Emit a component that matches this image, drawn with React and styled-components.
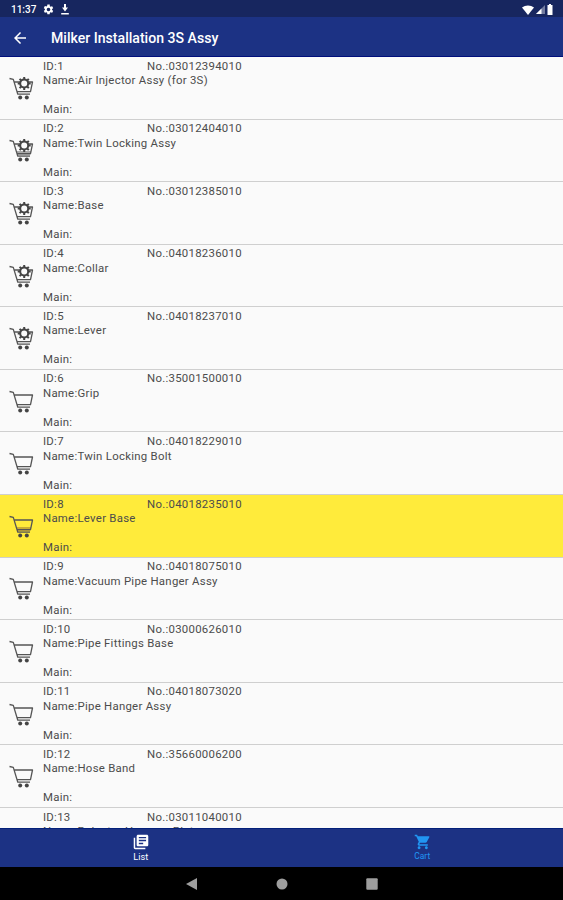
import { createGlobalStyle, styled } from "styled-components";

const parts = [
  { id: 1, no: "03012394010", name: "Air Injector Assy (for 3S)", assembly: true },
  { id: 2, no: "03012404010", name: "Twin Locking Assy", assembly: true, filled: true },
  { id: 3, no: "03012385010", name: "Base", assembly: true },
  { id: 4, no: "04018236010", name: "Collar", assembly: true },
  { id: 5, no: "04018237010", name: "Lever", assembly: true },
  { id: 6, no: "35001500010", name: "Grip" },
  { id: 7, no: "04018229010", name: "Twin Locking Bolt" },
  { id: 8, no: "04018235010", name: "Lever Base", selected: true },
  { id: 9, no: "04018075010", name: "Vacuum Pipe Hanger Assy" },
  { id: 10, no: "03000626010", name: "Pipe Fittings Base" },
  { id: 11, no: "04018073020", name: "Pipe Hanger Assy" },
  { id: 12, no: "35660006200", name: "Hose Band" },
  { id: 13, no: "03011040010", name: "Pulsator Hangers Plate" },
];

const GlobalStyle = createGlobalStyle`
  * {
    box-sizing: border-box;
  }
  body {
    margin: 0;
    font-family: Roboto, "Liberation Sans", sans-serif;
  }
`;

const Screen = styled.div`
  display: flex;
  flex-direction: column;
  width: 100%;
  height: 900px;
  overflow: hidden;
  background: #fafafa;
`;

const StatusBar = styled.div`
  display: flex;
  flex: none;
  align-items: center;
  justify-content: space-between;
  height: 17px;
  padding: 2px 10px 0 11px;
  background: #17265f;
  color: #fff;
`;

const StatusGroup = styled.div`
  display: flex;
  align-items: center;
  gap: ${(props) => props.$gap}px;
  svg {
    display: block;
  }
`;

const Clock = styled.span`
  width: 25px;
  font-size: 10px;
  font-weight: 500;
  line-height: 16px;
  margin-right: 1px;
`;

const AppBar = styled.header`
  display: flex;
  flex: none;
  align-items: center;
  height: 40px;
  padding: 2px 14px 0;
  border-bottom: 1.5px solid #000f7c;
  background: #1c3284;
  color: #fff;
  svg {
    display: block;
    margin-right: 25px;
  }
  h1 {
    margin: 0;
    font-size: 14.1px;
    font-weight: 500;
    line-height: 20px;
  }
`;

const List = styled.main`
  flex: 1;
  min-height: 0;
  overflow: hidden;
`;

const Row = styled.div`
  display: flex;
  height: 62.58px;
  border-bottom: 1.5px solid #cfcfcf;
  background: ${(props) => (props.$selected ? "#ffeb3b" : "#fafafa")};
`;

const IconCell = styled.div`
  display: flex;
  flex: none;
  align-items: center;
  width: 43px;
  padding: 2px 0 0 9px;
  svg {
    display: block;
  }
`;

const Details = styled.div`
  padding-top: 1.6px;
  font-size: 11.4px;
  line-height: 14.5px;
  letter-spacing: 0.27px;
  color: #4c4c4c;
  white-space: nowrap;
`;

const Codes = styled.div`
  display: grid;
  grid-template-columns: 104px auto;
`;

const MainCode = styled.div`
  margin-top: 14.5px;
`;

const TabBar = styled.nav`
  display: grid;
  flex: none;
  grid-template-columns: 1fr 1fr;
  height: 39.5px;
  border-top: 1.5px solid #04207a;
  background: #1c3284;
`;

const Tab = styled.div`
  display: flex;
  flex-direction: column;
  align-items: center;
  padding-top: 5px;
  color: ${(props) => (props.$active ? "#2196f3" : "#fff")};
  font-size: ${(props) => (props.$active ? 8.4 : 9.2)}px;
  line-height: 11px;
  svg {
    display: block;
    margin-bottom: 1px;
  }
`;

const SystemBar = styled.div`
  display: flex;
  flex: none;
  align-items: center;
  justify-content: center;
  gap: 78px;
  height: 33px;
  background: #000;
  svg {
    display: block;
  }
`;

const teeth = [0, 45, 90, 135, 180, 225, 270, 315];

const CartIcon = ({ assembly, filled, selected }) => (
  <svg width="25" height="24" viewBox="0 0 25 24" fill="none">
    {(filled || selected) && (
      <path d="M7.5 12h14.5L21 16.500H8.800z" fill={selected ? "#c8ad35" : "#aaa"} />
    )}
    <path
      d="M.5 1.500l3.800.900L8.800 17.200h12.200M5.300 5h18.200L21.500 14.600H8"
      stroke="#555"
      strokeWidth="1.300"
      strokeLinejoin="round"
    />
    <circle cx="11.200" cy="20.500" r="2" fill="#444" />
    <circle cx="17.800" cy="20.500" r="2" fill="#444" />
    {assembly && (
      <g stroke="#444">
        <circle cx="15.200" cy="6.500" r="4" fill="#fafafa" strokeWidth="2" />
        {teeth.map((angle) => (
          <path
            key={angle}
            d="M15.200 0v2.300"
            strokeWidth="2"
            transform={`rotate(${angle} 15.2 6.5)`}
          />
        ))}
      </g>
    )}
  </svg>
);

const PartRow = ({ part }) => (
  <Row $selected={part.selected}>
    <IconCell>
      <CartIcon
        assembly={part.assembly}
        filled={part.filled}
        selected={part.selected}
      />
    </IconCell>
    <Details>
      <Codes>
        <span>ID:{part.id}</span>
        <span>No.:{part.no}</span>
      </Codes>
      <div>Name:{part.name}</div>
      <MainCode>Main:</MainCode>
    </Details>
  </Row>
);

const App = () => {
  return (
    <Screen>
      <GlobalStyle />
      <StatusBar>
        <StatusGroup $gap={6}>
          <Clock>11:37</Clock>
          <svg width="11" height="11" viewBox="1 1 22 22" fill="#fff">
            <path d="M19.14 12.94c.04-.3.06-.61.06-.94s-.02-.64-.07-.94l2.03-1.58a.49.49 0 0 0 .12-.61l-1.92-3.32a.49.49 0 0 0-.59-.22l-2.39.96a7 7 0 0 0-1.62-.94l-.36-2.54A.48.48 0 0 0 13.92 2h-3.84a.48.48 0 0 0-.47.41l-.36 2.54c-.59.24-1.13.57-1.62.94l-2.39-.96a.48.48 0 0 0-.59.22L2.74 8.87a.48.48 0 0 0 .12.61l2.03 1.58a6 6 0 0 0 0 1.88l-2.03 1.58a.49.49 0 0 0-.12.61l1.92 3.32c.12.22.37.29.59.22l2.39-.96c.5.38 1.03.7 1.62.94l.36 2.54c.05.24.24.41.48.41h3.84c.24 0 .44-.17.47-.41l.36-2.54a7 7 0 0 0 1.62-.94l2.39.96c.22.08.47 0 .59-.22l1.92-3.32a.48.48 0 0 0-.12-.61zM12 15.6a3.6 3.6 0 1 1 0-7.2 3.6 3.6 0 0 1 0 7.2z" />
          </svg>
          <svg width="10" height="11" viewBox="0 0 10 11" fill="#fff">
            <path d="M4 0h2v3.500h2L5 7.500 2 3.500h2zM1.200 9h7.600v1.500H1.200z" />
          </svg>
        </StatusGroup>
        <StatusGroup $gap={2}>
          <svg width="12" height="10" viewBox="0 0 12 10" fill="#fff">
            <path d="M0 2.600C3.400-.3 8.600-.3 12 2.600L6 10z" />
          </svg>
          <svg width="9" height="9" viewBox="0 0 9 9" fill="#fff">
            <path d="M9 0v9H0z" opacity=".4" />
            <path d="M5.500 3.500V9H0z" />
          </svg>
          <svg width="6" height="11" viewBox="0 0 6 11" fill="#fff">
            <path d="M2 0h2v1h1.500v10h-5V1H2z" />
          </svg>
        </StatusGroup>
      </StatusBar>
      <AppBar>
        <svg width="12" height="12" viewBox="4 4 16 16" fill="#fff">
          <path d="M20 11H7.830l5.590-5.590L12 4l-8 8 8 8 1.410-1.410L7.830 13H20z" />
        </svg>
        <h1>Milker Installation 3S Assy</h1>
      </AppBar>
      <List>
        {parts.map((part) => (
          <PartRow key={part.id} part={part} />
        ))}
      </List>
      <TabBar>
        <Tab>
          <svg width="16" height="16" viewBox="1 1 22 22" fill="#fff">
            <path d="M4 6H2v14c0 1.100.9 2 2 2h14v-2H4zm16-4H8c-1.100 0-2 .9-2 2v12c0 1.100.9 2 2 2h12c1.100 0 2-.9 2-2V4c0-1.100-.9-2-2-2zm-1 9H9V9h10zm-4 4H9v-2h6zm4-8H9V5h10z" />
          </svg>
          List
        </Tab>
        <Tab $active>
          <svg width="16" height="16" viewBox="0 1 22 22" fill="#2196f3">
            <path d="M5 5h15l-3.500 7H8z" />
            <path d="M7 18c-1.100 0-1.990.9-1.990 2S5.900 22 7 22s2-.9 2-2-.9-2-2-2zM1 2v2h2l3.600 7.590-1.350 2.450C4.520 15.370 5.480 17 7 17h12v-2H7.420l-.03-.37.900-1.630h7.450c.750 0 1.410-.410 1.750-1.030l3.580-6.490A1 1 0 0 0 20.200 4H5.210L4.270 2zm16 16c-1.100 0-1.990.9-1.990 2s.890 2 1.990 2 2-.9 2-2-.9-2-2-2z" />
          </svg>
          Cart
        </Tab>
      </TabBar>
      <SystemBar>
        <svg width="12" height="12" viewBox="0 0 12 12" fill="#9e9e9e">
          <path d="M11 0v12L0 6z" />
        </svg>
        <svg width="12" height="12" viewBox="0 0 12 12" fill="#9e9e9e">
          <circle cx="6" cy="6" r="5.500" />
        </svg>
        <svg width="12" height="12" viewBox="0 0 12 12" fill="#9e9e9e">
          <rect x=".3" y=".3" width="11.400" height="11.400" rx="1" />
        </svg>
      </SystemBar>
    </Screen>
  );
};

export default App;
